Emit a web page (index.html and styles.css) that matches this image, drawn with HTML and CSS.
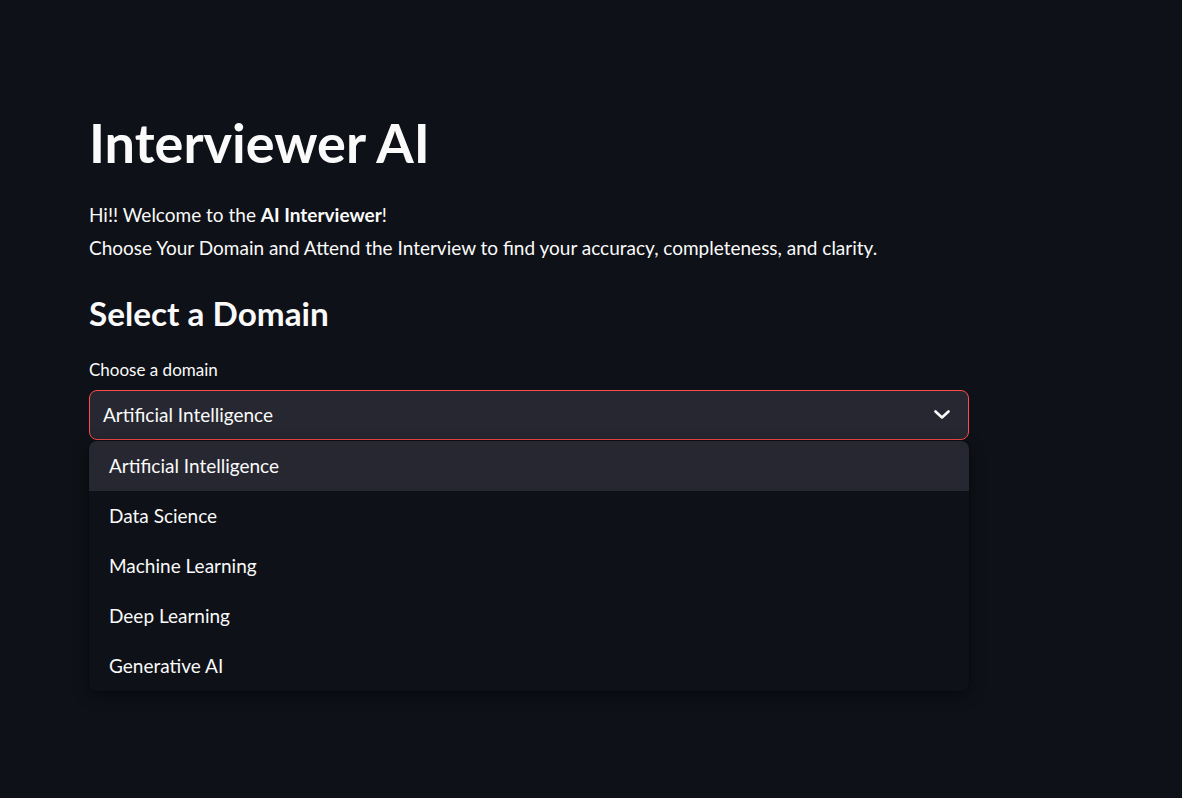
FILE: index.html
```html
<!DOCTYPE html>
<html lang="en">
<head>
<meta charset="utf-8">
<title>Interviewer AI</title>
<link rel="stylesheet" href="styles.css">
</head>
<body>
<main class="main">
  <h1 class="title">Interviewer AI</h1>
  <div class="intro">
    <p>Hi!! Welcome to the <strong>AI Interviewer</strong>!</p>
    <p>Choose Your Domain and Attend the Interview to find your accuracy, completeness, and clarity.</p>
  </div>
  <h3 class="subheader">Select a Domain</h3>
  <label class="label">Choose a domain</label>
  <div class="select-wrap">
    <div class="select">
      <span class="select-value">Artificial Intelligence</span>
      <svg class="chevron" width="16" height="10" viewBox="0 0 16 10" aria-hidden="true">
        <path d="M1.5 1.5 L8 7.5 L14.5 1.5" fill="none" stroke="#fafafa" stroke-width="2.6" stroke-linecap="round" stroke-linejoin="round"/>
      </svg>
    </div>
    <ul class="menu">
      <li class="option active">Artificial Intelligence</li>
      <li class="option">Data Science</li>
      <li class="option">Machine Learning</li>
      <li class="option">Deep Learning</li>
      <li class="option">Generative AI</li>
    </ul>
  </div>
</main>
</body>
</html>
```

FILE: styles.css
```css
* { box-sizing: border-box; }

html, body {
  margin: 0;
  height: 100%;
}

body {
  background: #0e1117;
  color: #fafafa;
  font-family: Lato, "Noto Sans", sans-serif;
  overflow: hidden;
}

.main {
  width: 880px;
  margin-left: 89px;
  padding-top: 110px;
  display: flex;
  flex-direction: column;
}

.title {
  margin: 0;
  font-size: 54px;
  line-height: 66px;
  font-weight: 700;
}

.intro {
  margin-top: 23px;
}

.intro p {
  margin: 0;
  font-size: 19px;
  line-height: 32px;
}

.intro p + p {
  margin-top: 1px;
}

.intro strong { font-weight: 700; }

.subheader {
  margin: 28px 0 0;
  font-size: 33.3px;
  line-height: 42px;
  font-weight: 700;
}

.label {
  margin-top: 22px;
  font-size: 17px;
  line-height: 28px;
}

.select-wrap {
  margin-top: 6px;
  position: relative;
}

.select {
  height: 50px;
  background: #262730;
  border: 1px solid #ff4b4b;
  border-radius: 8px;
  display: flex;
  align-items: center;
  justify-content: space-between;
  padding: 0 18px 0 13px;
}

.select-value {
  font-size: 19px;
  margin-top: -1px;
}

.chevron {
  display: block;
  margin-top: -1px;
}

.menu {
  position: absolute;
  top: 51px;
  left: 0;
  width: 880px;
  margin: 0;
  padding: 0;
  list-style: none;
  background: #0e1117;
  border-radius: 8px;
  overflow: hidden;
  box-shadow: 0 4px 16px rgba(0, 0, 0, 0.45), 0 0 2px rgba(0, 0, 0, 0.4);
}

.option {
  height: 50px;
  display: flex;
  align-items: center;
  padding-left: 20px;
  padding-bottom: 1px;
  font-size: 19px;
  color: #fafafa;
}

.option.active {
  background: #262730;
}
```
